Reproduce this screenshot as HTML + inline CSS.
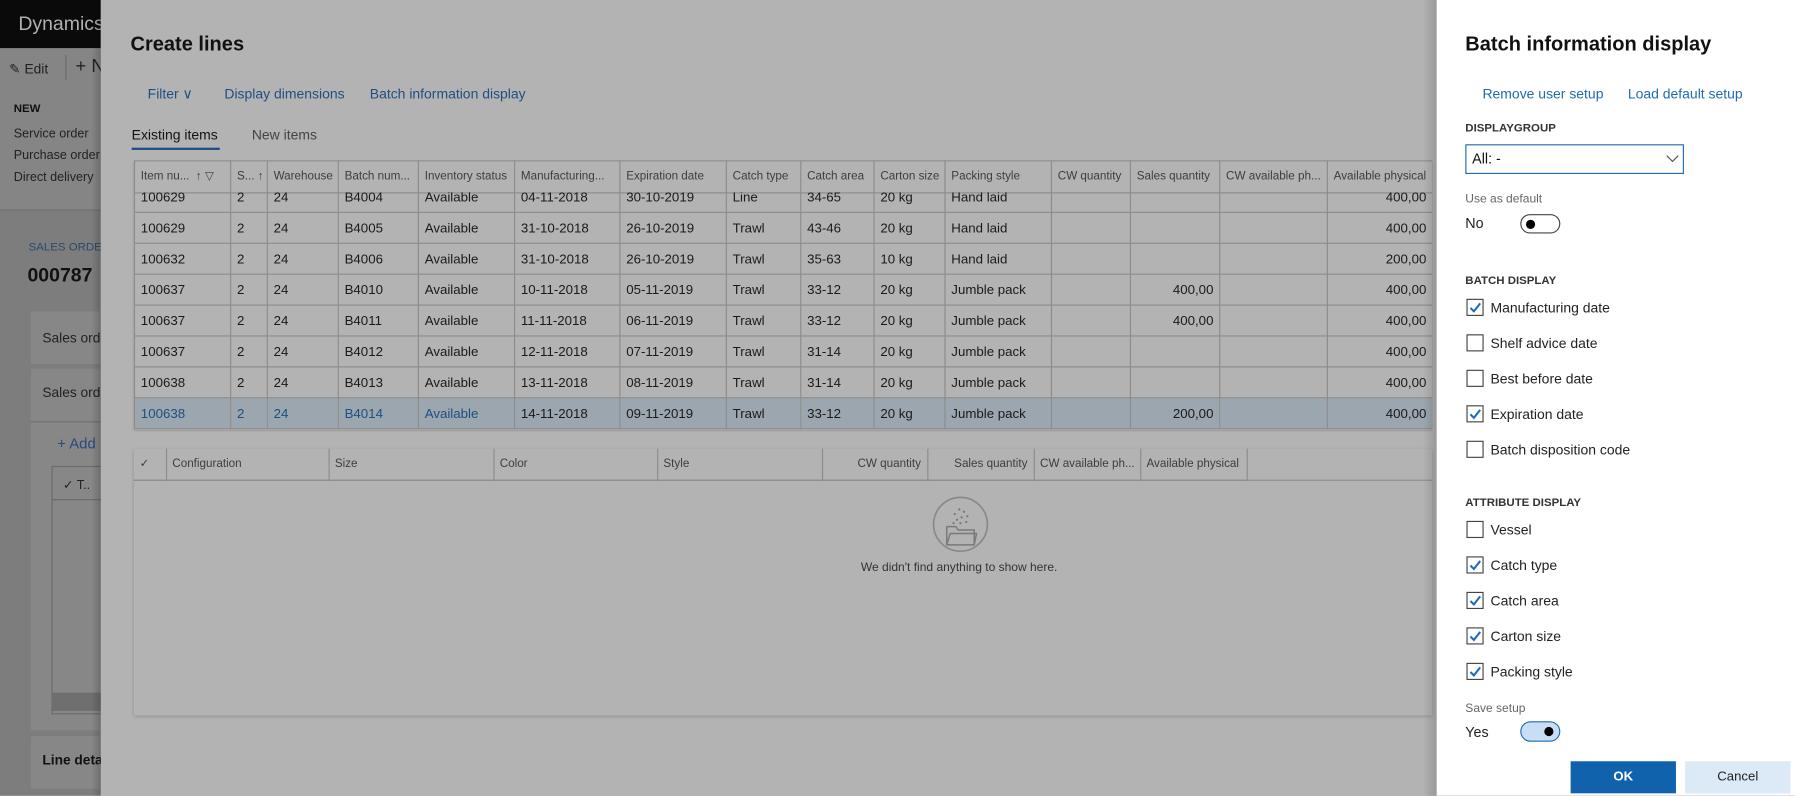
<!DOCTYPE html>
<html><head><meta charset="utf-8">
<style>
html,body{margin:0;padding:0;width:1795px;height:795px;overflow:hidden;background:#b3b3b3;}
#w{position:absolute;left:0;top:0;width:1568px;height:695px;transform:scale(1.14477);transform-origin:0 0;font-family:"Liberation Sans",sans-serif;}
.a{position:absolute;white-space:nowrap;}
#left{left:0;top:0;width:88px;height:695px;background:#7d7d7d;overflow:hidden;}
table{border-collapse:collapse;table-layout:fixed;position:absolute;}
td,th{border:1px solid #8c8c8c;overflow:hidden;white-space:nowrap;padding:0 0 0 5px;font-weight:normal;text-align:left;}
.g th{height:27px;font-size:10.2px;color:#3d3d3d;}
.g td{height:26px;font-size:11.6px;color:#1a1a1a;}
.r{text-align:right !important;padding-right:5px !important;}
.sel td{background:#9ba6af;}
.sel td.b{color:#1f4f80;}
.cb{position:absolute;width:15px;height:15px;border:1.5px solid #444;box-sizing:border-box;}
.cb svg{position:absolute;left:1px;top:1px;}
.lbl{font-size:12.2px;color:#222;}
.sec{font-size:10px;font-weight:bold;color:#333;}
</style></head><body><div id="w">
<div id="left" class="a">
 <div class="a" style="left:0;top:42px;width:88px;height:141px;background:#858585;"></div>
 <div class="a" style="left:0;top:0;width:88px;height:42px;background:#0a0a0a;"></div>
 <div class="a" style="left:16px;top:11px;font-size:17px;color:#b0b0b0;">Dynamics</div>
 <div class="a" style="left:8px;top:53px;font-size:12px;color:#222;">✎ Edit</div>
 <div class="a" style="left:57px;top:48px;width:1px;height:22px;background:#6a6a6a;"></div>
 <div class="a" style="left:66px;top:50px;font-size:16px;color:#222;">+ N</div>
 <div class="a" style="left:12px;top:90px;font-size:10px;font-weight:bold;color:#111;">NEW</div>
 <div class="a" style="left:12px;top:111px;font-size:11px;color:#222;">Service order</div>
 <div class="a" style="left:12px;top:130px;font-size:11px;color:#222;">Purchase order</div>
 <div class="a" style="left:12px;top:149px;font-size:11px;color:#222;">Direct delivery</div>
 <div class="a" style="left:0;top:183px;width:88px;height:1px;background:#6f6f6f;"></div>
 <div class="a" style="left:25px;top:211px;font-size:10px;color:#2a4a6a;">SALES ORDER</div>
 <div class="a" style="left:24px;top:231px;font-size:17px;font-weight:bold;color:#111;">000787</div>
 <div class="a" style="left:27px;top:272px;width:70px;height:46px;background:#878787;"></div>
 <div class="a" style="left:37px;top:288px;font-size:12px;color:#222;">Sales ord</div>
 <div class="a" style="left:27px;top:322px;width:70px;height:316px;background:#878787;"></div>
 <div class="a" style="left:27px;top:368px;width:70px;height:1px;background:#707070;"></div>
 <div class="a" style="left:37px;top:336px;font-size:12px;color:#222;">Sales ord</div>
 <div class="a" style="left:50px;top:380px;font-size:13px;color:#2a4a7a;">+ Add</div>
 <div class="a" style="left:45px;top:407px;width:50px;height:215px;border:1px solid #6a6a6a;"></div>
 <div class="a" style="left:45px;top:436px;width:50px;height:1px;background:#6a6a6a;"></div>
 <div class="a" style="left:55px;top:417px;font-size:11px;color:#222;">✓ T..</div>
 <div class="a" style="left:46px;top:605px;width:50px;height:16px;background:#6f6f6f;"></div>
 <div class="a" style="left:27px;top:643px;width:70px;height:46px;background:#878787;"></div>
 <div class="a" style="left:37px;top:657px;font-size:12px;font-weight:bold;color:#111;">Line deta</div>
 <div class="a" style="left:80px;top:0;width:8px;height:695px;background:linear-gradient(90deg,rgba(0,0,0,0),rgba(0,0,0,.18));"></div>
</div>

<div class="a" style="left:114px;top:28px;font-size:17.5px;font-weight:bold;color:#111;">Create lines</div>
<div class="a" style="left:129px;top:75px;font-size:12.2px;color:#1f4f80;">Filter ∨</div>
<div class="a" style="left:196px;top:75px;font-size:12.2px;color:#1f4f80;">Display dimensions</div>
<div class="a" style="left:323px;top:75px;font-size:12.2px;color:#1f4f80;">Batch information display</div>
<div class="a" style="left:115px;top:111px;font-size:12.2px;color:#111;">Existing items</div>
<div class="a" style="left:115px;top:129px;width:77px;height:2px;background:#1f4f80;"></div>
<div class="a" style="left:220px;top:111px;font-size:12.2px;color:#444;">New items</div>

<div class="a" style="left:117px;top:140px;width:1134px;height:235px;overflow:hidden;box-shadow:0 1px 2px rgba(0,0,0,.2);">
<table class="g" style="left:0;top:0;width:1134px;">
<colgroup><col style="width:84px"><col style="width:32px"><col style="width:62px"><col style="width:70px"><col style="width:84px"><col style="width:92px"><col style="width:93px"><col style="width:65px"><col style="width:64px"><col style="width:62px"><col style="width:93px"><col style="width:69px"><col style="width:78px"><col style="width:94px"><col style="width:92px"></colgroup>
<tr><th>Item nu... &nbsp;↑ ▽</th><th>S... ↑</th><th>Warehouse</th><th>Batch num...</th><th>Inventory status</th><th>Manufacturing...</th><th>Expiration date</th><th>Catch type</th><th>Catch area</th><th>Carton size</th><th>Packing style</th><th>CW quantity</th><th>Sales quantity</th><th>CW available ph...</th><th>Available physical</th></tr>
</table>
<div class="a" style="left:0;top:28px;width:1134px;height:207px;overflow:hidden;">
<table class="g" style="left:0;top:-10px;width:1134px;">
<colgroup><col style="width:84px"><col style="width:32px"><col style="width:62px"><col style="width:70px"><col style="width:84px"><col style="width:92px"><col style="width:93px"><col style="width:65px"><col style="width:64px"><col style="width:62px"><col style="width:93px"><col style="width:69px"><col style="width:78px"><col style="width:94px"><col style="width:92px"></colgroup>
<tr><td>100629</td><td>2</td><td>24</td><td>B4004</td><td>Available</td><td>04-11-2018</td><td>30-10-2019</td><td>Line</td><td>34-65</td><td>20 kg</td><td>Hand laid</td><td></td><td></td><td></td><td class="r">400,00</td></tr>
<tr><td>100629</td><td>2</td><td>24</td><td>B4005</td><td>Available</td><td>31-10-2018</td><td>26-10-2019</td><td>Trawl</td><td>43-46</td><td>20 kg</td><td>Hand laid</td><td></td><td></td><td></td><td class="r">400,00</td></tr>
<tr><td>100632</td><td>2</td><td>24</td><td>B4006</td><td>Available</td><td>31-10-2018</td><td>26-10-2019</td><td>Trawl</td><td>35-63</td><td>10 kg</td><td>Hand laid</td><td></td><td></td><td></td><td class="r">200,00</td></tr>
<tr><td>100637</td><td>2</td><td>24</td><td>B4010</td><td>Available</td><td>10-11-2018</td><td>05-11-2019</td><td>Trawl</td><td>33-12</td><td>20 kg</td><td>Jumble pack</td><td></td><td class="r">400,00</td><td></td><td class="r">400,00</td></tr>
<tr><td>100637</td><td>2</td><td>24</td><td>B4011</td><td>Available</td><td>11-11-2018</td><td>06-11-2019</td><td>Trawl</td><td>33-12</td><td>20 kg</td><td>Jumble pack</td><td></td><td class="r">400,00</td><td></td><td class="r">400,00</td></tr>
<tr><td>100637</td><td>2</td><td>24</td><td>B4012</td><td>Available</td><td>12-11-2018</td><td>07-11-2019</td><td>Trawl</td><td>31-14</td><td>20 kg</td><td>Jumble pack</td><td></td><td></td><td></td><td class="r">400,00</td></tr>
<tr><td>100638</td><td>2</td><td>24</td><td>B4013</td><td>Available</td><td>13-11-2018</td><td>08-11-2019</td><td>Trawl</td><td>31-14</td><td>20 kg</td><td>Jumble pack</td><td></td><td></td><td></td><td class="r">400,00</td></tr>
<tr class="sel"><td class="b">100638</td><td class="b">2</td><td class="b">24</td><td class="b">B4014</td><td class="b">Available</td><td>14-11-2018</td><td>09-11-2019</td><td>Trawl</td><td>33-12</td><td>20 kg</td><td>Jumble pack</td><td></td><td class="r">200,00</td><td></td><td class="r">400,00</td></tr>
</table></div></div>

<div class="a" style="left:117px;top:392px;width:1134px;height:233px;background:#b3b3b3;box-shadow:0 1px 3px rgba(0,0,0,.25);">
<table class="g" style="left:0;top:0;width:972px;">
<colgroup><col style="width:28px"><col style="width:142px"><col style="width:144px"><col style="width:143px"><col style="width:144px"><col style="width:92px"><col style="width:93px"><col style="width:93px"><col style="width:93px"></colgroup>
<tr><th style="border-left:none;border-top:none">✓</th><th style="border-top:none">Configuration</th><th style="border-top:none">Size</th><th style="border-top:none">Color</th><th style="border-top:none">Style</th><th class="r" style="border-top:none">CW quantity</th><th class="r" style="border-top:none">Sales quantity</th><th style="border-top:none">CW available ph...</th><th style="border-top:none">Available physical</th></tr>
</table>
<div class="a" style="left:0;top:27px;width:1134px;height:1px;background:#8c8c8c;"></div>
<svg class="a" style="left:697px;top:41px" width="50" height="50" viewBox="0 0 50 50"><circle cx="25" cy="25" r="23.5" fill="none" stroke="#8a8a8a" stroke-width="1.5"/><path d="M13 27h8l2 3h14v13H13z" fill="none" stroke="#7a7a7a" stroke-width="1.3"/><path d="M13 43l3-10h23l-2 10" fill="none" stroke="#7a7a7a" stroke-width="1.3"/><g fill="#7a7a7a"><circle cx="20" cy="16" r="1"/><circle cx="24" cy="12" r="1"/><circle cx="28" cy="14" r="1"/><circle cx="31" cy="18" r="1"/><circle cx="22" cy="21" r="1"/><circle cx="26" cy="19" r="1"/><circle cx="30" cy="23" r="1"/><circle cx="19" cy="24" r="1"/><circle cx="25" cy="24" r="1"/></g></svg>
<div class="a" style="left:635px;top:98px;font-size:10.5px;color:#333;">We didn't find anything to show here.</div>
</div>

<div class="a" style="left:1243px;top:0;width:12px;height:695px;background:linear-gradient(90deg,rgba(0,0,0,0),rgba(0,0,0,.15));"></div>
<div class="a" style="left:1255px;top:0;width:313px;height:695px;background:#fff;">
 <div class="a" style="left:25px;top:28px;font-size:17.5px;font-weight:bold;color:#111;">Batch information display</div>
 <div class="a" style="left:40px;top:75px;font-size:12.2px;color:#1f6bb5;">Remove user setup</div>
 <div class="a" style="left:167px;top:75px;font-size:12.2px;color:#1f6bb5;">Load default setup</div>
 <div class="a sec" style="left:25px;top:107px;">DISPLAYGROUP</div>
 <div class="a" style="left:25px;top:126px;width:191px;height:26px;border:1px solid #1f6bb5;box-sizing:border-box;"></div>
 <div class="a" style="left:31px;top:132px;font-size:12.5px;color:#111;">All: -</div>
 <svg class="a" style="left:200px;top:135px" width="12" height="8"><path d="M1 1l5 5 5-5" fill="none" stroke="#555" stroke-width="1"/></svg>
 <div class="a" style="left:25px;top:168px;font-size:10.5px;color:#666;">Use as default</div>
 <div class="a" style="left:25px;top:188px;font-size:12.5px;color:#222;">No</div>
 <div class="a" style="left:73px;top:187px;width:35px;height:17px;border:1.5px solid #444;border-radius:10px;box-sizing:border-box;"><div class="a" style="left:4px;top:3.5px;width:8px;height:8px;border-radius:50%;background:#000;"></div></div>
 <div class="a sec" style="left:25px;top:240px;">BATCH DISPLAY</div>

 <div class="cb" style="left:26px;top:261px;"><svg width="11" height="11"><path d="M1.5 6l3 3 5.5-7" fill="none" stroke="#1f6bb5" stroke-width="1.8"/></svg></div>
 <div class="a lbl" style="left:47px;top:262px;">Manufacturing date</div>
 <div class="cb" style="left:26px;top:292px;"></div><div class="a lbl" style="left:47px;top:293px;">Shelf advice date</div>
 <div class="cb" style="left:26px;top:323px;"></div><div class="a lbl" style="left:47px;top:324px;">Best before date</div>
 <div class="cb" style="left:26px;top:354px;"><svg width="11" height="11"><path d="M1.5 6l3 3 5.5-7" fill="none" stroke="#1f6bb5" stroke-width="1.8"/></svg></div>
 <div class="a lbl" style="left:47px;top:355px;">Expiration date</div>
 <div class="cb" style="left:26px;top:385px;"></div><div class="a lbl" style="left:47px;top:386px;">Batch disposition code</div>

 <div class="a sec" style="left:25px;top:434px;">ATTRIBUTE DISPLAY</div>
 <div class="cb" style="left:26px;top:455px;"></div><div class="a lbl" style="left:47px;top:456px;">Vessel</div>
 <div class="cb" style="left:26px;top:486px;"><svg width="11" height="11"><path d="M1.5 6l3 3 5.5-7" fill="none" stroke="#1f6bb5" stroke-width="1.8"/></svg></div><div class="a lbl" style="left:47px;top:487px;">Catch type</div>
 <div class="cb" style="left:26px;top:517px;"><svg width="11" height="11"><path d="M1.5 6l3 3 5.5-7" fill="none" stroke="#1f6bb5" stroke-width="1.8"/></svg></div><div class="a lbl" style="left:47px;top:518px;">Catch area</div>
 <div class="cb" style="left:26px;top:548px;"><svg width="11" height="11"><path d="M1.5 6l3 3 5.5-7" fill="none" stroke="#1f6bb5" stroke-width="1.8"/></svg></div><div class="a lbl" style="left:47px;top:549px;">Carton size</div>
 <div class="cb" style="left:26px;top:579px;"><svg width="11" height="11"><path d="M1.5 6l3 3 5.5-7" fill="none" stroke="#1f6bb5" stroke-width="1.8"/></svg></div><div class="a lbl" style="left:47px;top:580px;">Packing style</div>

 <div class="a" style="left:25px;top:613px;font-size:10.5px;color:#666;">Save setup</div>
 <div class="a" style="left:25px;top:633px;font-size:12.5px;color:#222;">Yes</div>
 <div class="a" style="left:73px;top:630px;width:35px;height:18px;border:1.5px solid #1f6bb5;background:#c7def5;border-radius:10px;box-sizing:border-box;"><div class="a" style="left:20px;top:3.5px;width:8px;height:8px;border-radius:50%;background:#000;"></div></div>
 <div class="a" style="left:117px;top:665px;width:92px;height:28px;background:#1062ad;color:#fff;font-size:11.5px;font-weight:bold;text-align:center;line-height:28px;">OK</div>
 <div class="a" style="left:217px;top:665px;width:92px;height:28px;background:#dce9f6;color:#222;font-size:11.5px;text-align:center;line-height:28px;">Cancel</div>
</div>
</div></body></html>
